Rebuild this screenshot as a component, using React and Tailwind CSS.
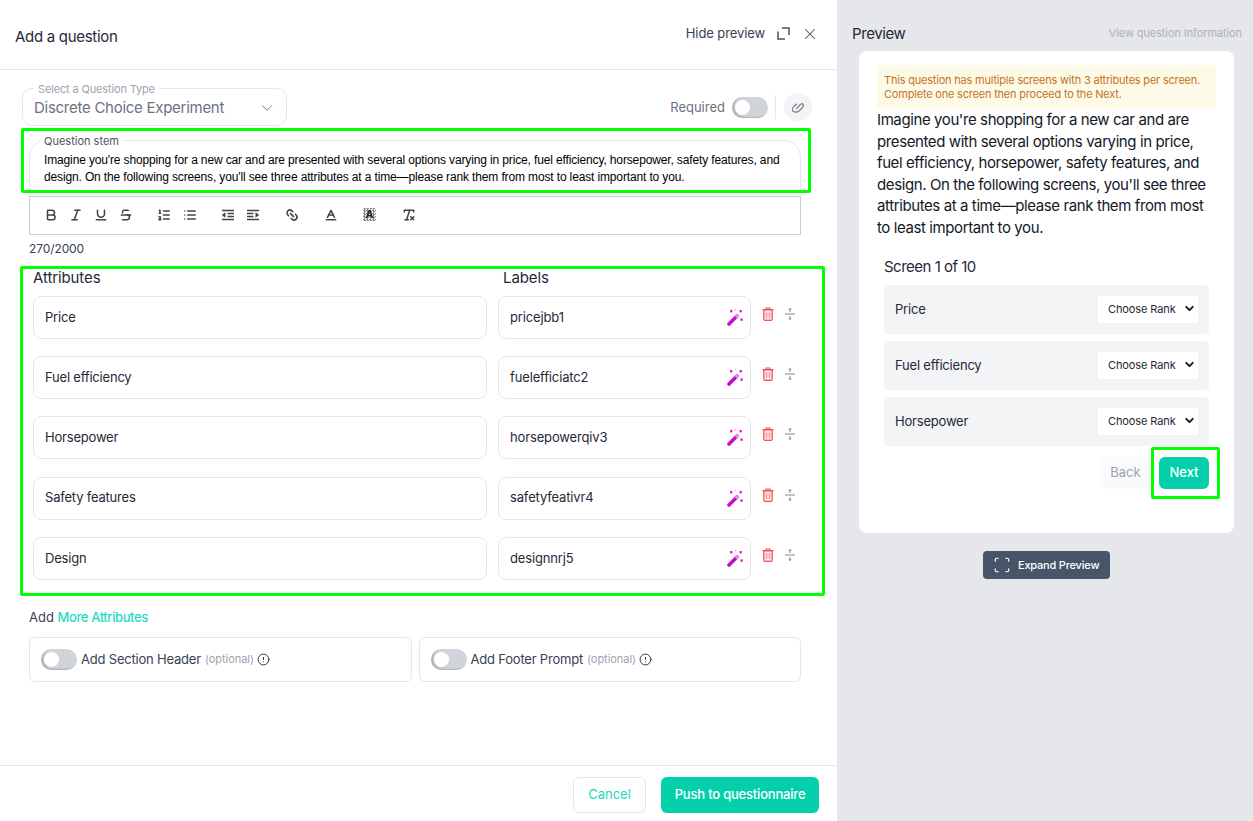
import React from 'react';
import {
  Bold, Italic, Underline, Strikethrough, ListOrdered, List,
  Link2, Baseline, RemoveFormatting, X, ChevronDown, CircleAlert, Scan,
} from 'lucide-react';

const attributes = [
  ['Price', 'pricejbb1'],
  ['Fuel efficiency', 'fuelefficiatc2'],
  ['Horsepower', 'horsepowerqiv3'],
  ['Safety features', 'safetyfeativr4'],
  ['Design', 'designnrj5'],
];

function Toggle() {
  return (
    <span className="flex h-[21px] w-[36px] shrink-0 items-center rounded-full bg-[#d1d5db] pl-[3px] shadow-[inset_2px_-1px_2px_rgba(0,0,0,0.18)]">
      <span className="h-[15px] w-[15px] rounded-full bg-white" />
    </span>
  );
}

function Wand() {
  return (
    <svg width="16" height="17" viewBox="0 0 16 17" className="shrink-0">
      <path d="M2 15 10 7" stroke="#c10fc8" strokeWidth="3.6" strokeLinecap="round" />
      <path d="M8.8 8.2 11 6" stroke="#e58aec" strokeWidth="3.6" />
      <rect x="3" y="1" width="2.4" height="2.4" fill="#e81fd0" />
      <rect x="12.5" y="1" width="2.4" height="2.4" fill="#e81fd0" />
      <rect x="13.4" y="9.4" width="2.4" height="2.4" fill="#e81fd0" />
      <rect x="8" y="0" width="1.2" height="1.2" fill="#f08ce8" />
    </svg>
  );
}

function Trash() {
  return (
    <svg width="12" height="14" viewBox="0 0 12 14" className="shrink-0">
      <path d="M4 2V1h4v1M.5 2.6h11" stroke="#f0525c" strokeWidth="1.2" fill="none" />
      <path d="M1.8 3v9.2c0 .7.5 1.2 1.2 1.2h6c.7 0 1.2-.5 1.2-1.2V3z" fill="#fde2e2" stroke="#f0525c" strokeWidth="1.2" />
      <path d="M4.5 5.5v5.5M7.5 5.5v5.5" stroke="#f0a0a0" strokeWidth="1.4" />
    </svg>
  );
}

function SortHandle() {
  return (
    <svg width="10" height="14" viewBox="0 0 10 14" className="shrink-0">
      <path d="M0 7h10" stroke="#9ca3af" strokeWidth="1.3" />
      <path d="M5 1v4M5 9v4" stroke="#9ca3af" strokeWidth="1.3" />
      <path d="M3.2 3 5 1l1.8 2zM3.2 11 5 13l1.8-2z" fill="#9ca3af" />
    </svg>
  );
}

function Corners() {
  return (
    <svg width="13" height="13" viewBox="0 0 13 13" className="shrink-0" fill="none" stroke="#4b5563" strokeWidth="1.5">
      <path d="M1 4.5V12h7" />
      <path d="M5 1h7v7" />
    </svg>
  );
}

function Loop() {
  return (
    <svg width="14" height="14" viewBox="0 0 14 14" fill="none" stroke="#6b7280" strokeWidth="1.1" strokeLinecap="round">
      <path d="M5.6 8.6 9.4 4.4c1-1 2.8-.6 3 .8.2 1.2-.6 2-1.4 2.8L8.4 10.6c-1.8 1.8-5 2-6.4.6C.8 9.8 1.6 7.6 3 6.4L5.6 4" />
    </svg>
  );
}

function Indent({ flip }) {
  return (
    <svg width="14" height="14" viewBox="0 0 14 14" className={flip ? '-scale-x-100' : ''}>
      <path d="M1 2.5h12M1 11.5h12M6.5 5.5H13M6.5 8.5H13" stroke="#444" strokeWidth="1.6" />
      <path d="M4.5 4.2v5.6L.8 7z" fill="#444" />
    </svg>
  );
}

function ToolIcon({ icon: Icon, className }) {
  return <Icon size={14} strokeWidth={2.6} className={`text-[#444] ${className || ''}`} />;
}

function OptionCard({ title }) {
  return (
    <div className="flex h-[45px] flex-1 items-center rounded-md border border-[#e5e7eb] pl-[11px]">
      <Toggle />
      <span className="ml-[4px] text-[13px] tracking-[-0.2px] text-[#374151]">{title}</span>
      <span className="ml-[4px] text-[11px] tracking-[-0.05px] text-[#9ca3af]">(optional)</span>
      <CircleAlert size={13} strokeWidth={1.6} className="ml-[3px] text-[#111827]" />
    </div>
  );
}

function RankRow({ name }) {
  return (
    <div className="flex h-[49px] items-center justify-between rounded bg-[#f3f4f6] px-[11px]">
      <span className="text-[13px] tracking-[-0.2px] text-[#1f2937]">{name}</span>
      <div className="relative">
        <select className="block h-[27px] w-[100px] appearance-none bg-white pl-[10px] text-[11px] tracking-[-0.1px] text-[#1f2937] outline-none">
          <option>Choose Rank</option>
        </select>
        <ChevronDown size={13} strokeWidth={3.6} className="pointer-events-none absolute right-[2px] top-[6px] text-[#111827]" />
      </div>
    </div>
  );
}

export default function App() {
  return (
    <div className="flex h-[821px] w-full overflow-hidden bg-[#e5e7eb] font-['Inter',sans-serif] text-[#1f2937]">
      {/* editor */}
      <div className="flex w-[837px] shrink-0 flex-col bg-white">
        <div className="flex h-[70px] shrink-0 items-start justify-between border-b border-[#e5e7eb] pl-[15px] pr-[18px]">
          <h1 className="mt-[27px] text-[15px] font-normal leading-5 tracking-[-0.3px] text-[#1f2937]">Add a question</h1>
          <div className="mt-[24px] flex items-center">
            <span className="text-[13px] tracking-[-0.1px] text-[#374151]">Hide preview</span>
            <span className="ml-[12px]"><Corners /></span>
            <X size={18} strokeWidth={1.4} className="ml-[11px] text-[#4b5563]" />
          </div>
        </div>

        <div className="min-h-0 flex-1">
          <div className="ml-[22px] mr-[25px] mt-[18px] flex items-start justify-between">
            <div className="relative flex h-[38px] w-[265px] items-center justify-between rounded-[10px] border border-[#e5e7eb] pl-[11px] pr-[10px] pt-[1px]">
              <span className="absolute -top-[6px] left-[11px] bg-white px-[4px] text-[11px] leading-[12px] tracking-[-0.15px] text-[#9ca3af]">Select a Question Type</span>
              <span className="text-[15px] leading-5 tracking-[-0.27px] text-[#6b7280]">Discrete Choice Experiment</span>
              <ChevronDown size={18} strokeWidth={1.3} className="text-[#6b7280]" />
            </div>
            <div className="mt-[5px] flex items-center">
              <span className="mt-[1px] text-[13px] text-[#6b7280]">Required</span>
              <span className="ml-[7px]"><Toggle /></span>
              <span className="ml-[7px] h-[24px] w-px bg-[#e5e7eb]" />
              <span className="ml-[8px] flex h-[28px] w-[28px] items-center justify-center rounded-full bg-[#f3f4f6]">
                <Loop />
              </span>
            </div>
          </div>

          <div className="ml-[21px] mt-[2px] h-[65px] w-[790px] overflow-hidden rounded-[2px] border-[3px] border-[#00ff00] pl-[5px] pr-[7px] pt-[9px]">
            <div className="relative h-[60px] rounded-t-[16px] border border-[#e5e7eb] px-[14px] pt-[11px] font-['Liberation_Sans',sans-serif] text-[12px] leading-[17px] tracking-[-0.14px] text-black">
              <span className="absolute -top-[6px] left-[10px] bg-white px-[4px] font-['Inter',sans-serif] text-[11px] leading-[12px] tracking-normal text-[#4b5563]">Question stem</span>
              Imagine you're shopping for a new car and are presented with several options varying in price, fuel efficiency, horsepower, safety features, and design. On the following screens, you'll see three attributes at a time—please rank them from most to least important to you.
            </div>
          </div>

          <div className="ml-[29px] mt-[3px] flex h-[39px] w-[772px] items-center border border-[#cccccc] pb-[2px] pl-[14px]">
            <div className="flex items-center gap-[11px]">
              <ToolIcon icon={Bold} /><ToolIcon icon={Italic} /><ToolIcon icon={Underline} /><ToolIcon icon={Strikethrough} />
            </div>
            <div className="ml-[24px] flex items-center gap-[12px]">
              <ToolIcon icon={ListOrdered} /><ToolIcon icon={List} />
            </div>
            <div className="ml-[24px] flex items-center gap-[11px]">
              <Indent /><Indent flip />
            </div>
            <div className="ml-[25px] flex items-center">
              <ToolIcon icon={Link2} className="rotate-45" />
              <span className="ml-[25px]"><ToolIcon icon={Baseline} /></span>
              <span className="ml-[25px] flex h-[13px] w-[13px] items-center justify-center bg-[repeating-conic-gradient(#888_0_25%,#eee_0_50%)] bg-[length:3px_3px] font-['Liberation_Sans',sans-serif] text-[11px] font-bold leading-none text-[#222]">A</span>
              <span className="ml-[26px]"><ToolIcon icon={RemoveFormatting} /></span>
            </div>
          </div>

          <p className="ml-[29px] mt-[6px] h-[16px] text-[12px] leading-4 tracking-[-0.1px] text-[#374151]">270/2000</p>

          <div className="ml-[20px] mt-[9px] h-[330px] w-[805px] rounded-[2px] border-[3px] border-[#00ff00] pl-[10px]">
            <div className="flex h-[27px] items-start text-[15px] leading-[18px] tracking-[-0.1px] text-[#1f2937]">
              <span className="w-[470px]">Attributes</span>
              <span>Labels</span>
            </div>
            <div className="flex flex-col gap-[17.2px]">
              {attributes.map(([name, label]) => (
                <div key={label} className="flex items-start">
                  <div className="flex h-[43px] w-[454px] items-center rounded-lg border border-[#e5e7eb] pl-[11px] text-[13px] tracking-[-0.2px] text-[#1f2937]">{name}</div>
                  <div className="ml-[11px] flex h-[43px] w-[253px] items-center justify-between rounded-lg border border-[#e5e7eb] pl-[11px] pr-[7px] text-[13px] tracking-[-0.15px] text-[#1f2937]">
                    <span>{label}</span>
                    <Wand />
                  </div>
                  <div className="ml-[11px] flex items-center gap-[11px] pt-[11px]">
                    <Trash />
                    <SortHandle />
                  </div>
                </div>
              ))}
            </div>
          </div>

          <p className="ml-[29px] mt-[11px] text-[13px] leading-[20px] text-[#374151]">
            Add <span className="font-medium tracking-[-0.4px] text-[#1fdcc0]">More Attributes</span>
          </p>

          <div className="ml-[29px] mt-[10px] flex w-[772px] gap-[7px]">
            <OptionCard title="Add Section Header" />
            <OptionCard title="Add Footer Prompt" />
          </div>
        </div>

        <div className="flex h-[56px] shrink-0 items-start justify-end gap-[15px] border-t border-[#e5e7eb] pr-[18px] pt-[11px]">
          <button className="h-[36px] w-[73px] rounded-md border border-[#e5e7eb] bg-white text-[13px] text-[#1fd6b8]">Cancel</button>
          <button className="h-[36px] w-[158px] rounded-md bg-[#04cfab] text-[13px] font-medium tracking-[-0.2px] text-white">Push to questionnaire</button>
        </div>
      </div>

      {/* preview */}
      <div className="flex min-w-0 flex-1 flex-col">
        <div className="flex h-[51px] shrink-0 items-start justify-between pl-[15px] pr-[11px] pt-[23px]">
          <span className="mt-[1px] text-[15px] leading-5 tracking-[-0.4px] text-[#1f2937]">Preview</span>
          <span className="pt-[2px] text-[11px] leading-4 tracking-[-0.1px] text-[#adb2bb]">View question Information</span>
        </div>
        <div className="ml-[22px] h-[482px] w-[375px] rounded-lg bg-white px-[18px] pt-[14px]">
          <div className="h-[44px] rounded bg-[#fefae8] px-[7px] pt-[8px] text-[11px] leading-[14px] tracking-[-0.2px] text-[#c4741f]">
            This question has multiple screens with 3 attributes per screen. Complete one screen then proceed to the Next.
          </div>
          <p className="text-[15px] leading-[21.6px] tracking-[-0.4px] text-[#111827]">
            Imagine you're shopping for a new car and are presented with several options varying in price, fuel efficiency, horsepower, safety features, and design. On the following screens, you'll see three attributes at a time—please rank them from most to least important to you.
          </p>
          <div className="mx-[7px] mt-[18.4px]">
            <div className="text-[15px] leading-5 tracking-[-0.5px] text-[#1f2937]">Screen 1 of 10</div>
            <div className="mt-[8px] flex flex-col gap-[7px]">
              <RankRow name="Price" />
              <RankRow name="Fuel efficiency" />
              <RankRow name="Horsepower" />
            </div>
            <div className="mt-[1px] flex justify-end">
              <div className="mt-[10px] flex h-[32px] w-[51px] items-center justify-center rounded bg-[#f9fafb] text-[13px] text-[#9ca3af]">Back</div>
              <div className="-mr-[11px] h-[52px] w-[69px] rounded-[2px] border-[3px] border-[#00ff00] pl-[5px] pt-[7px]">
                <button className="h-[32px] w-[50px] rounded-md bg-[#04cfab] text-[13px] font-medium text-white">Next</button>
              </div>
            </div>
          </div>
        </div>
        <div className="mt-[18px] pl-[146px]">
          <button className="flex h-[28px] w-[127px] items-center gap-[7px] rounded bg-[#475569] pl-[10px] text-[11px] font-medium tracking-[-0.2px] text-white">
            <Scan size={18} strokeWidth={1.6} />
            Expand Preview
          </button>
        </div>
      </div>
    </div>
  );
}
